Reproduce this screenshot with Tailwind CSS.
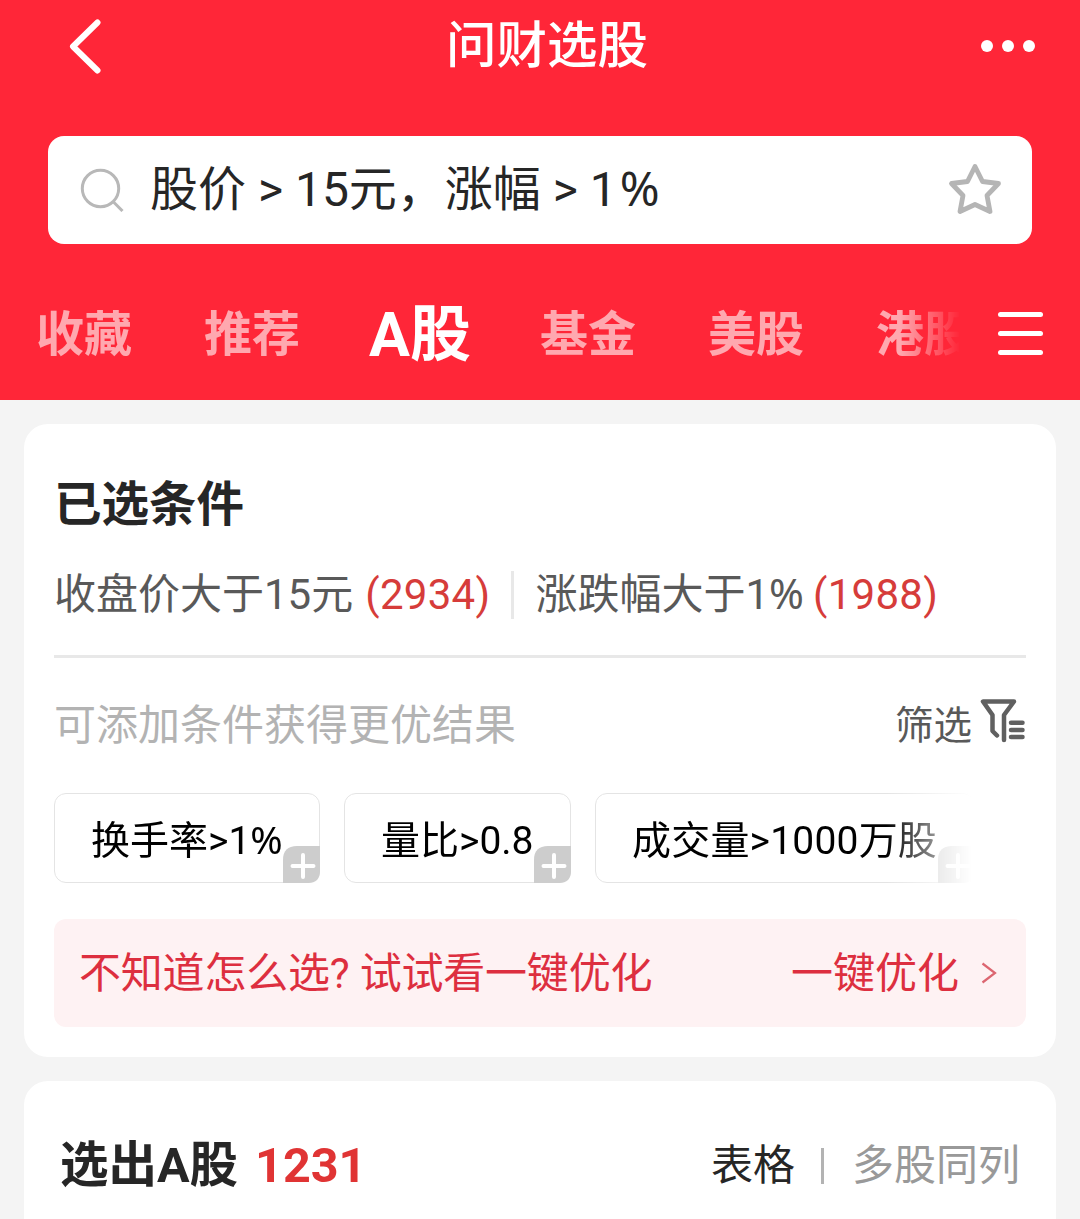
<!DOCTYPE html>
<html lang="zh-CN">
  <head>
    <meta charset="UTF-8" />
    <meta name="viewport" content="width=device-width, initial-scale=1.0" />
    <title>问财选股</title>
    <script src="https://cdn.jsdelivr.net/npm/@tailwindcss/browser@4"></script>
  </head>
  <body
    class="h-[1219px] bg-[#f4f4f4] font-[Roboto,'Noto_Sans_CJK_SC',sans-serif] text-[#262626] whitespace-nowrap"
  >
    <header class="h-[400px] bg-[#ff2638] text-white">
      <div class="flex h-[92px] items-center justify-between pr-[45px] pl-[69px]">
        <svg class="h-14 w-11" viewBox="0 0 44 56" fill="none">
          <path
            d="M28.500 4.500L4 28.500L28.500 52.500"
            stroke="white"
            stroke-width="6"
            stroke-linecap="round"
            stroke-linejoin="round"
          />
        </svg>
        <h1 class="text-[50.500px] leading-[84px] font-medium">问财选股</h1>
        <div class="flex w-[54px] gap-[9px]">
          <span class="size-3 rounded-full bg-white"></span>
          <span class="size-3 rounded-full bg-white"></span>
          <span class="size-3 rounded-full bg-white"></span>
        </div>
      </div>

      <div
        class="mx-12 mt-11 flex h-[108px] items-center rounded-[16px] bg-white pr-[28px] pl-8 text-[#262626]"
      >
        <svg class="size-11" viewBox="0 0 44 44" fill="none">
          <circle cx="20.500" cy="20.500" r="18.200" stroke="#b8b8b8" stroke-width="3" />
          <path d="M33.500 34L42.500 43" stroke="#b8b8b8" stroke-width="3" />
        </svg>
        <div class="ml-[26px] flex-1 text-[48px] leading-[72px]">
          股价 &gt; 15元，涨幅 &gt; 1<span class="ml-[3px] font-['Noto_Sans'] leading-none">%</span>
        </div>
        <svg class="size-[58px]" viewBox="0 0 58 58" fill="none">
          <path
            d="M29 5.500L36.500 20.500L52.500 22.500L41 34.500L44 50.500L29 43.500L14 50.500L17 34.500L5.500 22.500L21.500 20.500Z"
            stroke="#b5b5b5"
            stroke-width="4.800"
            stroke-linejoin="round"
          />
        </svg>
      </div>

      <div class="mt-[52px] flex h-[72px] items-center">
        <nav
          class="flex w-[960px] items-center gap-[72px] mask-r-from-[900px] mask-r-to-[960px] pt-[6px] pl-9 text-[48px] leading-[72px] font-bold text-white/60"
        >
          <span>收藏</span>
          <span>推荐</span>
          <span class="flex w-24 justify-center text-[61px] text-white">A股</span>
          <span>基金</span>
          <span>美股</span>
          <span>港股</span>
        </nav>
        <div class="mt-[3px] ml-[38px] flex w-[45px] flex-col gap-[14px]">
          <span class="h-[5px] rounded-full bg-white"></span>
          <span class="h-[5px] rounded-full bg-white"></span>
          <span class="h-[5px] rounded-full bg-white"></span>
        </div>
      </div>
    </header>

    <main class="flex flex-col gap-6 px-6 pt-6">
      <section class="h-[633px] rounded-[24px] bg-white px-[30px] pt-[45px]">
        <h2 class="text-[47.500px] leading-[72px] font-bold">已选条件</h2>
        <div
          class="mt-[21px] flex h-[66px] items-center text-[42px] leading-[66px] text-[#595959]"
        >
          <span>收盘价大于15元</span>
          <span class="ml-3 tracking-[0.300px] text-[#d63c3a]">(2934)</span>
          <span class="mr-[21px] ml-[21px] h-12 w-[3px] bg-[#e8e8e8]"></span>
          <span>涨跌幅大于1<span class="font-['Noto_Sans'] leading-none">%</span></span>
          <span class="ml-[9px] tracking-[0.300px] text-[#d63c3a]">(1988)</span>
        </div>
        <div class="mt-[27px] h-[3px] bg-[#e8e8e8]"></div>

        <div class="mt-[35px] flex h-[66px] items-center justify-between">
          <span class="text-[42px] leading-[66px] text-[#b3b3b3]">可添加条件获得更优结果</span>
          <div class="flex items-center gap-2">
            <span class="text-[38.500px] leading-[66px] text-[#595959]">筛选</span>
            <svg class="mb-3 h-[46px] w-[46px]" viewBox="0 0 46 46" fill="none" stroke="#606060">
              <path
                d="M17 38.500L12.500 34V18L3 4.500H34L24 18V43"
                stroke-width="4.500"
                stroke-linecap="round"
                stroke-linejoin="round"
              />
              <path
                d="M31 25.700H42.500M31 32.900H42.500M31 40.100H42.500"
                stroke-width="4.500"
                stroke-linecap="round"
              />
            </svg>
          </div>
        </div>

        <div
          class="mt-[34px] flex w-[918px] gap-6 mask-r-from-[832px] mask-r-to-[918px] text-[39px] leading-[94px] text-black"
        >
          <div
            class="relative h-[90px] w-[266px] shrink-0 rounded-[12px] border border-[#e4e4e4] pl-9"
          >
            换手率&gt;1<span class="font-['Noto_Sans'] leading-none">%</span>
            <svg class="absolute -right-px -bottom-px size-[37px]" viewBox="0 0 37 37">
              <path d="M0 37V14Q0 0 14 0H37V25Q37 37 25 37Z" fill="#cdcdcd" />
              <path
                d="M9.500 20H30.500M20 9V31"
                stroke="white"
                stroke-width="4"
                stroke-linecap="round"
              />
            </svg>
          </div>
          <div
            class="relative h-[90px] w-[227px] shrink-0 rounded-[12px] border border-[#e4e4e4] pl-9"
          >
            量比&gt;0.8
            <svg class="absolute -right-px -bottom-px size-[37px]" viewBox="0 0 37 37">
              <path d="M0 37V14Q0 0 14 0H37V25Q37 37 25 37Z" fill="#cdcdcd" />
              <path
                d="M9.500 20H30.500M20 9V31"
                stroke="white"
                stroke-width="4"
                stroke-linecap="round"
              />
            </svg>
          </div>
          <div
            class="relative h-[90px] w-[380px] shrink-0 rounded-[12px] border border-[#e4e4e4] pl-9 tracking-[0.200px]"
          >
            成交量&gt;1000万股
            <svg class="absolute -right-px -bottom-px size-[37px]" viewBox="0 0 37 37">
              <path d="M0 37V14Q0 0 14 0H37V25Q37 37 25 37Z" fill="#cdcdcd" />
              <path
                d="M9.500 20H30.500M20 9V31"
                stroke="white"
                stroke-width="4"
                stroke-linecap="round"
              />
            </svg>
          </div>
        </div>

        <div
          class="mt-9 flex h-[108px] items-center rounded-[12px] bg-[#fef2f3] pr-[29px] pl-[25px] text-[42px] leading-[66px] text-[#dd2f3f]"
        >
          <span class="pt-[2px] tracking-[-0.200px]">不知道怎么选? 试试看一键优化</span>
          <span class="ml-auto pt-[2px]">一键优化</span>
          <svg class="ml-[22px] h-6 w-4" viewBox="0 0 16 24" fill="none">
            <path d="M1.500 2.500L14 12L1.500 21.500" stroke="#dc6670" stroke-width="2.200" />
          </svg>
        </div>
      </section>

      <section
        class="flex h-[138px] items-start justify-between rounded-t-[24px] bg-white pt-[52px] pr-9 pl-9"
      >
        <h2 class="text-[48.500px] leading-[66px] font-bold">
          选出A股<span class="ml-[17px] text-[#e03434]">1231</span>
        </h2>
        <div class="flex items-center text-[42px] leading-[66px]">
          <span>表格</span>
          <span class="mr-7 ml-[26px] h-9 w-[3px] bg-[#b3b3b3]"></span>
          <span class="text-[#999999]">多股同列</span>
        </div>
      </section>
    </main>
  </body>
</html>
